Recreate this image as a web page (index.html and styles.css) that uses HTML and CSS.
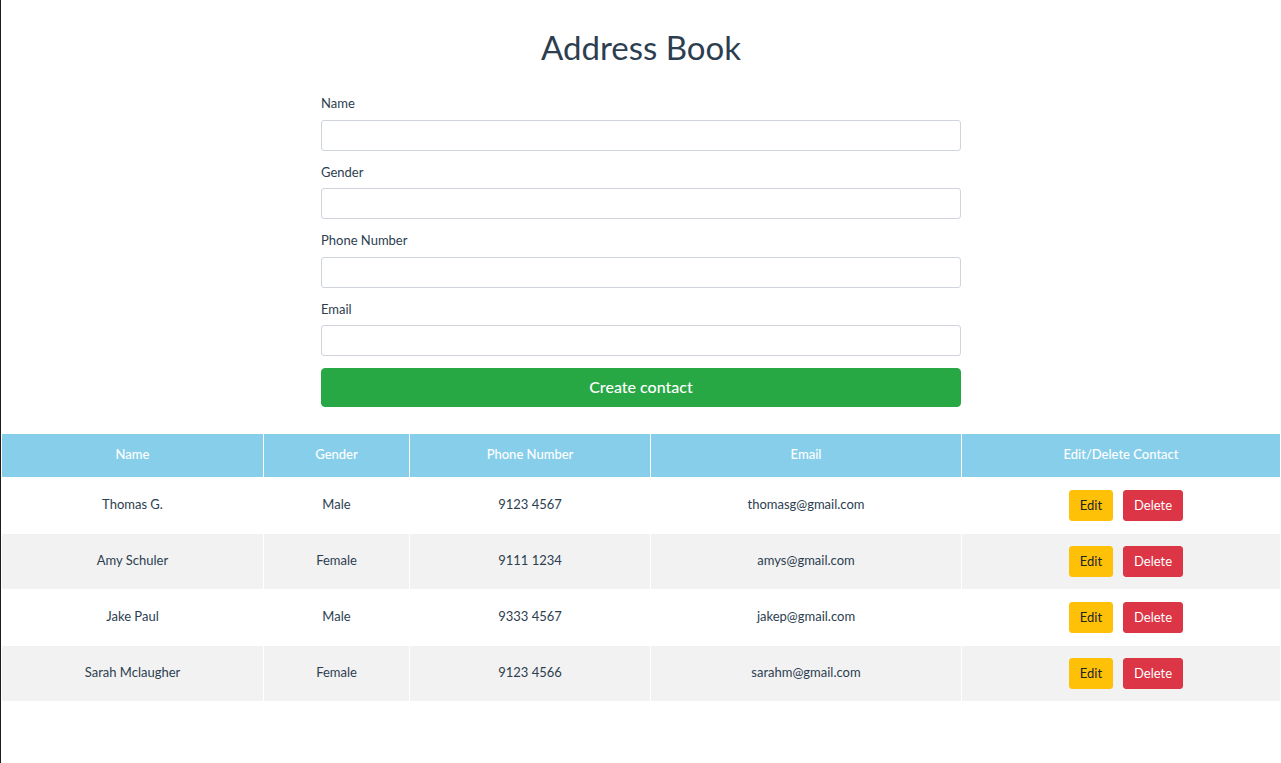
FILE: index.html
```html
<!DOCTYPE html>
<html lang="en">
<head>
<meta charset="utf-8">
<title>Address Book</title>
<link rel="stylesheet" href="styles.css">
</head>
<body>
<div class="app">
  <h1 class="title">Address Book</h1>
  <form class="contact-form">
    <div class="form-group">
      <label class="form-label">Name</label>
      <input class="form-control" type="text">
    </div>
    <div class="form-group">
      <label class="form-label">Gender</label>
      <input class="form-control" type="text">
    </div>
    <div class="form-group">
      <label class="form-label">Phone Number</label>
      <input class="form-control" type="text">
    </div>
    <div class="form-group">
      <label class="form-label">Email</label>
      <input class="form-control" type="text">
    </div>
    <button class="btn-create" type="button">Create contact</button>
  </form>

  <table class="contacts">
    <colgroup>
      <col class="col-name">
      <col class="col-gender">
      <col class="col-phone">
      <col class="col-email">
      <col class="col-actions">
    </colgroup>
    <thead>
      <tr>
        <th>Name</th>
        <th>Gender</th>
        <th>Phone Number</th>
        <th>Email</th>
        <th>Edit/Delete Contact</th>
      </tr>
    </thead>
    <tbody>
      <tr>
        <td>Thomas G.</td>
        <td>Male</td>
        <td>9123 4567</td>
        <td>thomasg@gmail.com</td>
        <td class="cell-actions"><div class="actions"><button class="btn-edit" type="button">Edit</button><button class="btn-delete" type="button">Delete</button></div></td>
      </tr>
      <tr>
        <td>Amy Schuler</td>
        <td>Female</td>
        <td>9111 1234</td>
        <td>amys@gmail.com</td>
        <td class="cell-actions"><div class="actions"><button class="btn-edit" type="button">Edit</button><button class="btn-delete" type="button">Delete</button></div></td>
      </tr>
      <tr>
        <td>Jake Paul</td>
        <td>Male</td>
        <td>9333 4567</td>
        <td>jakep@gmail.com</td>
        <td class="cell-actions"><div class="actions"><button class="btn-edit" type="button">Edit</button><button class="btn-delete" type="button">Delete</button></div></td>
      </tr>
      <tr>
        <td>Sarah Mclaugher</td>
        <td>Female</td>
        <td>9123 4566</td>
        <td>sarahm@gmail.com</td>
        <td class="cell-actions"><div class="actions"><button class="btn-edit" type="button">Edit</button><button class="btn-delete" type="button">Delete</button></div></td>
      </tr>
    </tbody>
  </table>
</div>
</body>
</html>
```

FILE: styles.css
```css
* { box-sizing: border-box; }

html, body {
  margin: 0;
  padding: 0;
  background: #ffffff;
}

body {
  min-height: 100vh;
  border-left: 1px solid #1e1e1e;
  font-family: Lato, "Noto Sans", "Liberation Sans", sans-serif;
  color: #2c3e50;
}

.app {
  text-align: center;
  padding-top: 28px;
}

.title {
  margin: 0 0 28px;
  font-size: 33px;
  line-height: 38px;
  font-weight: 400;
  color: #2c3e50;
}

.contact-form {
  width: 640px;
  margin: 0 auto;
  text-align: left;
}

.form-group {
  margin-bottom: 12px;
}

.form-label {
  display: block;
  font-size: 13px;
  line-height: 19.5px;
  margin-bottom: 6px;
  color: #2c3e50;
}

.form-control {
  display: block;
  width: 100%;
  height: 31px;
  padding: 4px 8px;
  font-family: inherit;
  font-size: 14px;
  border: 1px solid #ced4da;
  border-radius: 3px;
  background: #fff;
}

.btn-create {
  display: block;
  width: 100%;
  height: 39px;
  margin-top: 1px;
  padding: 0 0 2px;
  border: 1px solid #28a745;
  border-radius: 4px;
  background: #28a745;
  color: #ffffff;
  font-family: inherit;
  font-size: 16px;
  font-weight: 500;
  line-height: 24px;
}

.contacts {
  width: 100%;
  margin-top: 26px;
  border-collapse: collapse;
  font-size: 13px;
}

.col-name { width: 262px; }
.col-gender { width: 146px; }
.col-phone { width: 241px; }
.col-email { width: 311px; }

.contacts th,
.contacts td {
  border: 1px solid #ffffff;
  text-align: center;
  vertical-align: middle;
  padding: 0 8px 4px;
}

.contacts th {
  height: 44px;
  background: #87ceeb;
  color: #ffffff;
  font-weight: 500;
}

.contacts td {
  height: 56px;
  color: #2c3e50;
}

.contacts td.cell-actions {
  padding-bottom: 0;
}

.contacts tbody tr:nth-child(even) td {
  background: #f2f2f2;
}

.actions {
  display: flex;
  justify-content: center;
  gap: 10px;
  padding-left: 10px;
}

.btn-edit,
.btn-delete {
  height: 31px;
  border: 1px solid transparent;
  border-radius: 3px;
  font-family: inherit;
  font-size: 13px;
  line-height: 19px;
  padding: 0 0 1px;
}

.btn-edit {
  width: 44px;
  background: #ffc107;
  border-color: #ffc107;
  color: #212529;
}

.btn-delete {
  width: 60px;
  background: #dc3545;
  border-color: #dc3545;
  color: #ffffff;
}
```
